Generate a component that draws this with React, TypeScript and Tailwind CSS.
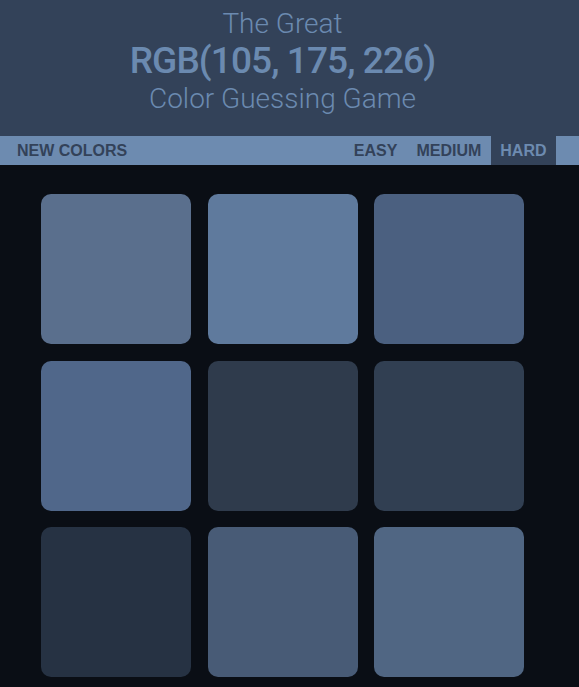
const SQUARES = [
  '#5a6f8d',
  '#5f7a9d',
  '#4b6080',
  '#50678a',
  '#2f3b4c',
  '#313f52',
  '#263243',
  '#485b76',
  '#506683',
];

const LEVELS = ['Easy', 'Medium', 'Hard'];

export default function App() {
  const active = 'Hard';

  return (
    <div className="min-h-screen bg-[#0a0e15]">
      {/* Header */}
      <header className="h-[136px] bg-[#334259] pr-[14px] pt-[7px] text-center text-[#6b8ab0] font-['Roboto',sans-serif]">
        <h1>
          <span className="block text-[28px] font-light leading-[34px]">The Great</span>
          <span className="block text-[37px] font-medium leading-[40px] tracking-[-0.9px]">RGB(105, 175, 226)</span>
          <span className="block text-[28px] font-light leading-[36px]">Color Guessing Game</span>
        </h1>
      </header>

      {/* Toolbar */}
      <div className="flex h-[29px] items-stretch bg-[#6d8bb0] pr-[23px] font-['Liberation_Sans',Arial,sans-serif] text-[16px] font-bold uppercase text-[#334259]">
        <button className="pl-[17px] pr-[10px] uppercase">New Colors</button>
        <div className="flex-1" />
        {LEVELS.map((level) => (
          <button
            key={level}
            className={`px-[9.5px] uppercase ${
              level === active ? 'bg-[#334259] text-[#6d8bb0]' : ''
            }`}
          >
            {level}
          </button>
        ))}
      </div>

      {/* Squares */}
      <div className="grid w-fit grid-cols-[repeat(3,150px)] gap-[16.5px] pl-[41px] pt-[29px]">
        {SQUARES.map((color, i) => (
          <div key={i} className="h-[150px] w-[150px] rounded-[10px]" style={{ backgroundColor: color }} />
        ))}
      </div>
    </div>
  );
}
